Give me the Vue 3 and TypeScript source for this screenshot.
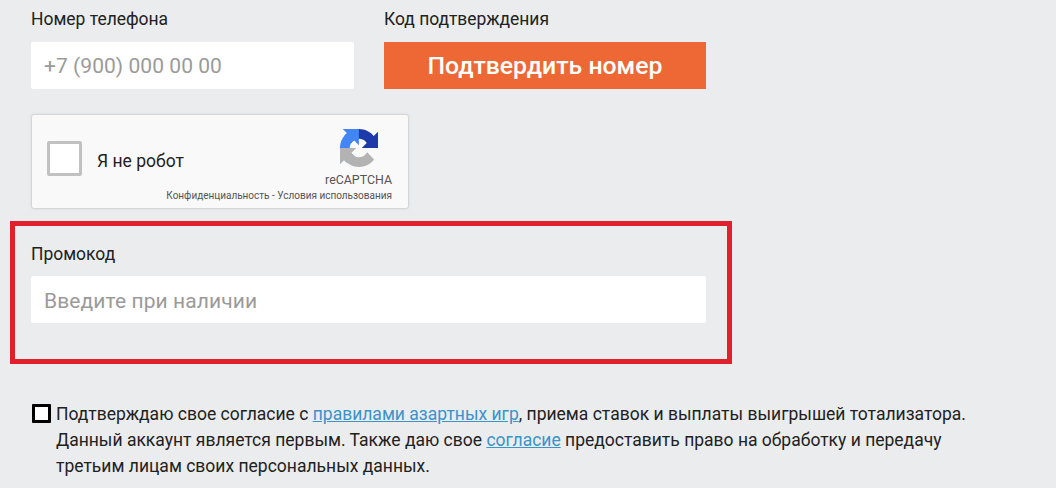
<template>
  <div class="page">
    <div class="row">
      <div class="col">
        <label class="label" for="phone">Номер телефона</label>
        <input id="phone" class="field" type="text" placeholder="+7 (900) 000 00 00" />
      </div>
      <div class="col">
        <span class="label">Код подтверждения</span>
        <button class="confirm" type="button">Подтвердить номер</button>
      </div>
    </div>

    <div class="captcha">
      <span class="captcha-box"></span>
      <span class="captcha-text">Я не робот</span>
      <div class="captcha-brand">
        <svg class="captcha-logo" viewBox="0 0 64 64" aria-hidden="true">
          <path
            d="M64 31.955l-.033-1.37V4.687l-7.16 7.16C50.948 4.674 42.033.093 32.05.093c-10.4 0-19.622 4.96-25.458 12.64l11.736 11.86a15.55 15.55 0 0 1 4.754-5.334c2.05-1.6 4.952-2.906 8.968-2.906.485 0 .86.057 1.135.163 4.976.393 9.288 3.14 11.828 7.124l-8.307 8.307 26.2.001"
            fill="#1c3aa9"
          />
          <path
            d="M31.862 0l-1.37.033H4.594l7.16 7.16C4.58 13.05 0 21.967 0 31.95c0 10.4 4.96 19.622 12.64 25.458l11.86-11.736a15.55 15.55 0 0 1-5.334-4.754c-1.6-2.05-2.906-4.952-2.906-8.968 0-.485.057-.86.163-1.135.393-4.976 3.14-9.288 7.124-11.828l8.307 8.307L31.862 0"
            fill="#4285f4"
          />
          <path
            d="M.001 31.955l.033 1.37v25.9l7.16-7.16c5.86 7.173 14.774 11.754 24.76 11.754 10.4 0 19.622-4.96 25.458-12.64l-11.736-11.86a15.55 15.55 0 0 1-4.754 5.334c-2.05 1.6-4.952 2.906-8.968 2.906-.485 0-.86-.057-1.135-.163-4.976-.393-9.288-3.14-11.828-7.124l8.307-8.307-26.2-.001"
            fill="#b3b3b3"
          />
        </svg>
        <span class="captcha-name">reCAPTCHA</span>
        <span class="captcha-terms">Конфиденциальность - Условия использования</span>
      </div>
    </div>

    <div class="promo">
      <label class="label" for="promo">Промокод</label>
      <input id="promo" class="field" type="text" placeholder="Введите при наличии" />
    </div>

    <div class="consent">
      <span class="consent-box"></span>
      <p class="consent-text">
        Подтверждаю свое согласие с <a href="#">правилами азартных игр</a>, приема ставок и выплаты выигрышей тотализатора.
        <br />
        Данный аккаунт является первым. Также даю свое <a href="#">согласие</a> предоставить право на обработку и передачу
        <br />
        третьим лицам своих персональных данных.
      </p>
    </div>
  </div>
</template>

<script setup lang="ts">
</script>

<style>
html,
body {
  margin: 0;
  background: #ebecee;
}
</style>

<style scoped>
.page {
  box-sizing: border-box;
  width: 1056px;
  height: 488px;
  padding: 8px 0 0 31px;
  overflow: hidden;
  background: #ebecee;
  font-family: Roboto, "Noto Sans", sans-serif;
  color: #212121;
}

.row {
  display: flex;
  gap: 30px;
}

.col {
  display: flex;
  flex-direction: column;
  width: 322px;
}

.col:first-child {
  width: 323px;
}

.label {
  display: block;
  height: 34px;
  font-size: 17.45px;
  line-height: 22px;
}

.field {
  box-sizing: border-box;
  display: block;
  width: 100%;
  height: 47px;
  padding: 0 13px;
  border: 0;
  border-radius: 2px;
  outline: 0;
  background: #fff;
  font-family: inherit;
  font-size: 21px;
  letter-spacing: 0.05px;
  color: #212121;
}

.field::placeholder {
  color: #9a9a9a;
  opacity: 1;
}

.confirm {
  height: 47px;
  padding: 0;
  border: 0;
  background: #ee6836;
  font-family: inherit;
  font-size: 24.8px;
  font-weight: 500;
  color: #fff;
}

.captcha {
  box-sizing: border-box;
  display: flex;
  align-items: center;
  width: 378px;
  height: 95px;
  margin-top: 25px;
  padding: 0 16px 6px 15px;
  border: 1px solid #d6d6d6;
  border-radius: 3px;
  background: #f9f9f9;
  box-shadow: 0 0 3px rgba(0, 0, 0, 0.08);
}

.captcha-box {
  box-sizing: border-box;
  flex: none;
  width: 35px;
  height: 35px;
  border: 3px solid #c1c1c1;
  border-radius: 2px;
  background: #fff;
}

.captcha-text {
  flex: 1;
  width: 0;
  margin-left: 15px;
  padding-top: 4px;
  font-size: 17.5px;
  white-space: nowrap;
  color: #222;
}

.captcha-brand {
  display: flex;
  flex: none;
  flex-direction: column;
  align-items: flex-end;
  align-self: flex-start;
  padding-top: 14px;
}

.captcha-logo {
  display: block;
  width: 38px;
  height: 38px;
  margin-right: 14px;
}

.captcha-name {
  margin-top: 6px;
  font-size: 12.4px;
  line-height: 14px;
  color: #555;
}

.captcha-terms {
  margin-top: 3px;
  font-size: 10px;
  line-height: 12px;
  white-space: nowrap;
  color: #555;
}

.promo {
  box-sizing: border-box;
  width: 722px;
  height: 143px;
  margin: 12px 0 0 -21px;
  padding: 17px 21px 0 16px;
  border: 5px solid #e0202c;
}

.promo .label {
  height: 33px;
}

.promo .field {
  padding-top: 2px;
  letter-spacing: 0.1px;
}

.consent {
  display: flex;
  gap: 5px;
  margin-top: 37px;
  margin-left: 1px;
}

.consent-box {
  box-sizing: border-box;
  flex: none;
  width: 19px;
  height: 19px;
  margin-top: 3px;
  border: 3px solid #000;
  border-radius: 1px;
  background: #fff;
}

.consent-text {
  margin: 0;
  font-size: 17.5px;
  line-height: 26px;
  white-space: nowrap;
  color: #212121;
}

.consent-text a {
  color: #3a93c9;
  text-decoration: underline;
}
</style>
